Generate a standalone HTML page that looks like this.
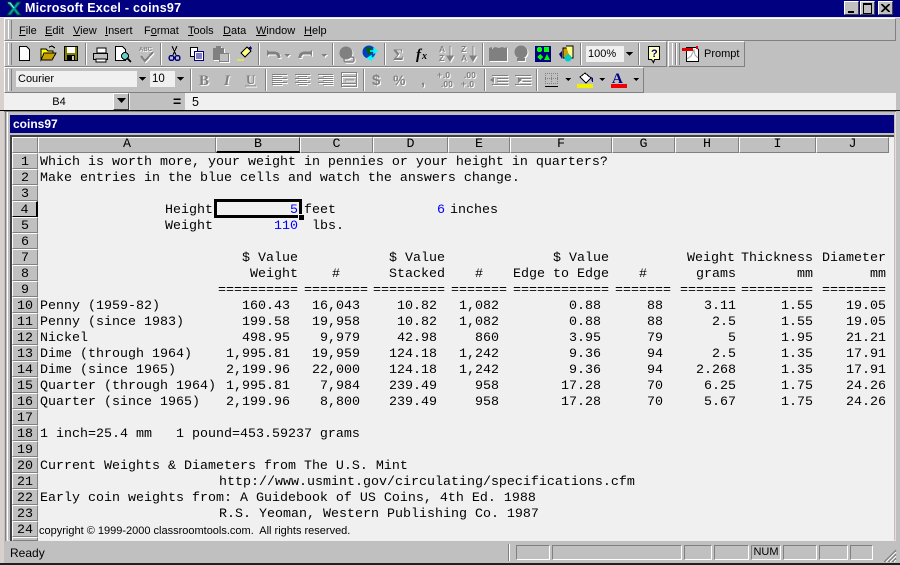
<!DOCTYPE html>
<html><head><meta charset="utf-8"><title>Microsoft Excel - coins97</title>
<style>
html,body{margin:0;padding:0;width:900px;height:565px;overflow:hidden;background:#c0c0c0}
body{position:relative;font-family:"Liberation Sans",Arial,sans-serif;font-size:12px;color:#000}
.a{position:absolute}
.r{position:absolute;left:0;width:900px;height:16px;line-height:16px;font-family:"Liberation Mono","Courier New",monospace;font-size:13.33px;white-space:pre}
.r span{position:absolute;top:2px}
.bl{color:#0000ff}
.h{position:absolute;background:#c0c0c0;border-top:1px solid #fff;border-left:1px solid #fff;border-right:1px solid #808080;border-bottom:1px solid #808080;box-sizing:border-box;text-align:center;font-family:"Liberation Mono",monospace;font-size:13.33px;line-height:14px}
.n{padding-top:2px;line-height:13px}
.p{position:absolute;top:545px;height:15px;box-sizing:border-box;border-top:1px solid #808080;border-left:1px solid #808080;border-right:1px solid #fff;border-bottom:1px solid #fff}
.e{right:602px}.c{right:532px}.d{right:455px}.g{right:291px}.l{right:14px}
.c2{right:540px}.d2{right:463px}.f2{right:401px}.g2{right:299px}.k2{right:237px}.b2{right:610px}
.sep{position:absolute;width:1px;background:#808080;border-right:1px solid #fff}
.grip{position:absolute;width:2px;border-left:1px solid #fff;border-right:1px solid #808080;background:#c0c0c0}
.tb{position:absolute;box-sizing:border-box;border-top:1px solid #fff;border-left:1px solid #fff;border-right:1px solid #808080;border-bottom:1px solid #808080}
.dis{filter:drop-shadow(1px 1px 0 #fff)}
</style></head><body>

<!-- frame -->
<div class="a" style="left:0;top:0;width:4px;height:565px;background:#d8d0cc"></div>
<div class="a" style="left:0;top:0;width:900px;height:17px;background:#000080"></div>
<div class="a" style="left:0;top:17px;width:900px;height:1px;background:#e8e4e0"></div>
<div class="a" style="left:25px;top:0;height:17px;line-height:16px;color:#fff;font-weight:bold;font-size:12.5px;letter-spacing:.25px;white-space:nowrap">Microsoft Excel - coins97</div>

<!-- app icon -->
<svg class="a" style="left:6px;top:1px" width="16" height="15" viewBox="0 0 16 15"><path d="M1 1h4l3 4 3-4h4L10 7.500 15 14h-4L8 10l-3 4H1l5-6.500z" fill="#00a0a0" stroke="#003838" stroke-width="1"/><path d="M2 2h2l4 5" stroke="#9ff" fill="none"/></svg>

<!-- window buttons -->
<div class="tb" style="left:844px;top:1px;width:15px;height:14px;background:#c0c0c0;border-color:#fff #404040 #404040 #fff"><div class="a" style="left:3px;top:9px;width:6px;height:2px;background:#000"></div></div>
<div class="tb" style="left:860px;top:1px;width:15px;height:14px;background:#c0c0c0;border-color:#fff #404040 #404040 #fff"><div class="a" style="left:2px;top:1px;width:7px;height:8px;border:1px solid #000;border-top-width:2px"></div></div>
<div class="tb" style="left:878px;top:1px;width:15px;height:14px;background:#c0c0c0;border-color:#fff #404040 #404040 #fff"><svg class="a" style="left:2px;top:2px" width="9" height="8"><path d="M0 0l8 8M1 0l8 8M8 0L0 8M9 0L1 8" stroke="#000" stroke-width="1"/></svg></div>

<!-- menu bar -->
<div class="tb" style="left:4px;top:18px;width:892px;height:23px;border-right-color:#808080"></div>
<div class="grip" style="left:8px;top:20px;height:19px"></div>
<div class="a" id="menu" style="top:22px;left:0;height:18px;line-height:18px;font-size:11px;white-space:nowrap">
<span class="a" style="left:19px"><u>F</u>ile</span><span class="a" style="left:45px"><u>E</u>dit</span><span class="a" style="left:73px"><u>V</u>iew</span><span class="a" style="left:105px"><u>I</u>nsert</span><span class="a" style="left:144px">F<u>o</u>rmat</span><span class="a" style="left:188px"><u>T</u>ools</span><span class="a" style="left:223px"><u>D</u>ata</span><span class="a" style="left:256px"><u>W</u>indow</span><span class="a" style="left:304px"><u>H</u>elp</span>
</div>

<!-- toolbars bg -->
<div class="tb" style="left:4px;top:41px;width:663px;height:26px"></div>
<div class="tb" style="left:668px;top:41px;width:77px;height:26px"></div>
<div class="tb" style="left:4px;top:67px;width:640px;height:26px"></div>
<div class="grip" style="left:8px;top:43px;height:22px"></div>
<div class="grip" style="left:8px;top:69px;height:22px"></div>
<div class="grip" style="left:672px;top:43px;height:22px"></div>
<div class="grip" style="left:676px;top:43px;height:22px"></div>
<div class="sep" style="left:85px;top:43px;height:22px"></div>
<div class="sep" style="left:160px;top:43px;height:22px"></div>
<div class="sep" style="left:258px;top:43px;height:22px"></div>
<div class="sep" style="left:332px;top:43px;height:22px"></div>
<div class="sep" style="left:384px;top:43px;height:22px"></div>
<div class="sep" style="left:482px;top:43px;height:22px"></div>
<div class="sep" style="left:580px;top:43px;height:22px"></div>
<div class="sep" style="left:638px;top:43px;height:22px"></div>
<div class="sep" style="left:190px;top:69px;height:22px"></div>
<div class="sep" style="left:265px;top:69px;height:22px"></div>
<div class="sep" style="left:363px;top:69px;height:22px"></div>
<div class="sep" style="left:484px;top:69px;height:22px"></div>
<div class="sep" style="left:536px;top:69px;height:22px"></div>

<!-- boxes -->
<div class="a" style="left:16px;top:71px;width:121px;height:16px;background:#f0f0f0;line-height:17px;font-size:11px;padding-left:2px;box-sizing:border-box">Courier</div>
<div class="a" style="left:137px;top:71px;width:9px;height:16px;background:#c0c0c0"></div>
<div class="a" style="left:150px;top:71px;width:25px;height:16px;background:#f0f0f0;line-height:17px;font-size:11.500px;padding-left:2px;box-sizing:border-box">10</div>
<div class="a" style="left:175px;top:71px;width:11px;height:16px;background:#c0c0c0"></div>
<div class="a" style="left:586px;top:46px;width:48px;height:16px;background:#f0f0f0"></div>
<div class="a" style="left:588px;top:46px;height:16px;line-height:17px;font-size:11px">100%</div>
<div class="a" style="left:624px;top:46px;width:10px;height:16px;background:#c0c0c0"></div>
<div class="a" style="left:704px;top:45px;line-height:19px;font-size:11px">Prompt</div>

<!-- toolbar icons -->
<svg class="a" style="left:0;top:40px" width="760" height="54" viewBox="0 40 760 54" font-family="Liberation Sans,sans-serif">
<g shape-rendering="crispEdges">
<!-- new -->
<path d="M19.500 46.500h7l3 3v11h-10z" fill="#fff" stroke="#000"/>
<!-- open -->
<path d="M41 60V49h5l2 2h5v2h-8l-4 7z" fill="#ff0" stroke="#000" stroke-width="1"/><path d="M41 60l3-7h12l-4 7z" fill="#c8a000" stroke="#000"/><path d="M49 47l3-1 3 2" stroke="#000" fill="none"/>
<!-- save -->
<rect x="64.500" y="46.500" width="13" height="14" fill="#808000" stroke="#000"/><rect x="67" y="47" width="8" height="6" fill="#fff"/><rect x="67" y="55" width="8" height="5" fill="#000"/><rect x="72" y="56" width="2" height="4" fill="#ccc"/>
<!-- print -->
<path d="M97 48h9v5h-9z" fill="#fff" stroke="#000"/><path d="M93.500 53.500h14v6h-14z" fill="#c0c0c0" stroke="#000"/><path d="M96 59h10v3H96z" fill="#fff" stroke="#000"/>
<!-- preview -->
<path d="M115.500 46.500h7l3 3v11h-10z" fill="#fff" stroke="#000"/><circle cx="125" cy="56" r="3.500" fill="#6cc" stroke="#000"/><path d="M127 58l4 4" stroke="#000" stroke-width="2"/>
<!-- spell -->
<g class="dis"><text x="139" y="51" font-size="6" font-weight="bold" fill="#808080">ABC</text><path d="M141 56l4 5 8-9" stroke="#808080" stroke-width="2" fill="none"/></g>
<!-- cut -->
<path d="M172 46l4 9M177 46l-4 9" stroke="#000"/><circle cx="171.500" cy="58" r="2.500" fill="none" stroke="#000080" stroke-width="1.500"/><circle cx="177.500" cy="58" r="2.500" fill="none" stroke="#000080" stroke-width="1.500"/>
<!-- copy -->
<path d="M190.500 47.500h7v9h-7z" fill="#fff" stroke="#000"/><path d="M194.500 51.500h9v9h-9z" fill="#fff" stroke="#000080"/><path d="M196 54h6M196 56h6M196 58h6" stroke="#000080"/>
<!-- paste -->
<g class="dis"><path d="M213 48h11v12h-11z" fill="#808080"/><rect x="216" y="46" width="5" height="3" fill="#808080"/><rect x="219.500" y="53.500" width="9" height="8" fill="#c0c0c0" stroke="#808080"/></g>
<!-- painter -->
<path d="M241 53l6-6 4 4-6 6z" fill="#ffff80" stroke="#000"/><path d="M248 48l3-2 1 3-2 1z" fill="#000080"/><path d="M237 60h7" stroke="#ff0" stroke-width="1"/>
<!-- undo/redo -->
<g class="dis"><path d="M267 53h7c4 0 5 2 5 5" fill="none" stroke="#808080" stroke-width="3"/><path d="M267 50v6l4-3z" fill="#808080"/>
<path d="M285 52h6l-3 3z" fill="#808080" transform="translate(-1 2)"/>
<path d="M312 53h-7c-4 0-5 2-5 5" fill="none" stroke="#808080" stroke-width="3"/><path d="M312 50v6l-4-3z" fill="#808080"/>
<path d="M321 54h6l-3 3z" fill="#808080"/></g>
</g>
<!-- hyperlink -->
<g class="dis"><circle cx="346" cy="53" r="6.500" fill="#808080"/><rect x="344" y="57" width="10" height="5" rx="2" fill="none" stroke="#808080" stroke-width="1.500"/></g>
<!-- web -->
<circle cx="369" cy="52" r="6.500" fill="#0040c0"/><path d="M366 47l5 1 1 4-3 3-2-3z" fill="#006000"/><path d="M370 51h7M377 51l-3-2v4zM368 58h7M368 58l3-2v4z" stroke="#0ff" stroke-width="1.500" fill="#0ff"/>
<!-- sum / fx -->
<text class="dis" x="393" y="60" font-size="16" font-weight="bold" fill="#808080" font-family="Liberation Serif,serif">Σ</text>
<text x="416" y="59" font-size="15" font-weight="bold" font-style="italic" font-family="Liberation Serif,serif">f</text><text x="422" y="59" font-size="10" font-weight="bold" font-style="italic" font-family="Liberation Serif,serif">x</text>
<!-- sort -->
<g class="dis"><text x="439" y="52" font-size="8.500" font-weight="bold" fill="#808080">A</text><text x="439" y="61" font-size="8.500" font-weight="bold" fill="#808080">Z</text><path d="M450 46v12M447 56h6l-3 5z" stroke="#808080" fill="#808080"/>
<text x="461" y="52" font-size="8.500" font-weight="bold" fill="#808080">Z</text><text x="461" y="61" font-size="8.500" font-weight="bold" fill="#808080">A</text><path d="M473 46v12M470 56h6l-3 5z" stroke="#808080" fill="#808080"/>
<!-- map -->
<path d="M489 48l3-1v2l3-2 4 1 3-1 3 1 2-1v14h-18z" fill="#808080"/>
<!-- drawing -->
<circle cx="521" cy="52" r="6.500" fill="#808080"/><rect x="517" y="58" width="8" height="3" fill="#808080"/></g>
<!-- shapes -->
<g shape-rendering="crispEdges"><rect x="535" y="46" width="16" height="16" fill="#000080"/><rect x="537" y="47" width="5" height="5" fill="#0f0" rx="2"/><rect x="544" y="47" width="5" height="5" fill="#0f0"/><path d="M540 54l3 3-3 3-3-3zM547 54l3 6h-6z" fill="#0f0"/></g>
<!-- 3d -->
<path d="M563 48h6v10h-6z" fill="#c8a000" stroke="#000"/><path d="M566 46h7v12h-3" fill="#ffff80" stroke="#000"/><path d="M559 54l3-3v8z" fill="#000080"/><circle cx="568" cy="58" r="3.500" fill="#0cc"/>
<!-- help -->
<path d="M648.500 46.500h11v13h-5l-1 3-2-3h-3z" fill="#ffffc0" stroke="#000" shape-rendering="crispEdges"/><text x="651" y="57" font-size="11" font-weight="bold" fill="#000080">?</text>
<!-- pdf -->
<g shape-rendering="crispEdges"><path d="M686.500 47.500h10l2 2v12h-12z" fill="#fff" stroke="#000"/><rect x="682" y="48" width="11" height="3" fill="#e00000"/><rect x="696" y="46" width="2" height="3" fill="#e00000"/></g><path d="M687 59l4-3 3-6 1 5 3 3" fill="none" stroke="#a0a0a0"/>
<!-- combo arrows -->
<g shape-rendering="crispEdges" fill="#000"><path d="M139 77h7l-3.500 4z"/><path d="M177 77h7l-3.500 4z"/><path d="M626 52h7l-3.500 4z"/><path d="M565 78h6l-3 3z"/><path d="M599 78h6l-3 3z"/><path d="M633 78h6l-3 3z"/></g>
<!-- B I U -->
<g class="dis">
<text x="199" y="85" font-size="15" font-weight="bold" fill="#808080" font-family="Liberation Serif,serif">B</text>
<text x="224" y="85" font-size="15" font-weight="bold" font-style="italic" fill="#808080" font-family="Liberation Serif,serif">I</text>
<text x="246" y="84" font-size="13" font-weight="bold" fill="#808080" font-family="Liberation Serif,serif">U</text><path d="M245 86h11" stroke="#808080"/>
</g>
<g shape-rendering="crispEdges" stroke="#808080" stroke-width="1" fill="none" class="dis">
<path d="M272 74.500h15M272 76.500h10M272 78.500h15M272 80.500h10M272 82.500h15M272 84.500h10"/>
<path d="M295 74.500h15M298 76.500h9M295 78.500h15M298 80.500h9M295 82.500h15M298 84.500h9"/>
<path d="M318 74.500h15M323 76.500h10M318 78.500h15M323 80.500h10M318 82.500h15M323 84.500h10"/>
<rect x="341.500" y="72.500" width="15" height="14"/><path d="M342 76.500h14M342 83.500h14M345 80h9"/>
<path d="M492 75.500h16M497 78.500h11M497 81.500h11M492 84.500h16"/>
<path d="M515 75.500h16M520 78.500h11M520 81.500h11M515 84.500h16"/>
</g>
<g class="dis">
<path d="M490 80l4-3v6zM522 80l-4-3v6z" fill="#808080"/>
<text x="372" y="85" font-size="15" font-weight="bold" fill="#808080">$</text>
<text x="393" y="85" font-size="14" font-weight="bold" fill="#808080">%</text>
<text x="421" y="85" font-size="15" font-weight="bold" fill="#808080">,</text>
<text x="443" y="78" font-size="8.500" font-weight="bold" fill="#808080">.0</text><text x="441" y="87" font-size="8.500" font-weight="bold" fill="#808080">.00</text><text x="437" y="78" font-size="9" font-weight="bold" fill="#808080">+</text>
<text x="464" y="78" font-size="8.500" font-weight="bold" fill="#808080">.00</text><text x="467" y="87" font-size="8.500" font-weight="bold" fill="#808080">.0</text><text x="461" y="87" font-size="9" font-weight="bold" fill="#808080">+</text>
</g>
<!-- borders -->
<g shape-rendering="crispEdges"><path d="M545 73.500h13M545 78.500h13M545 83.500h13M545.500 73v11M551.500 73v11M557.500 73v11" stroke="#808080" stroke-dasharray="1 1" fill="none"/><rect x="545" y="86" width="13" height="1" fill="#000"/>
<!-- fill -->
<path d="M580 77l5-4 6 5-5 5z" fill="#fff" stroke="#000"/><path d="M591 77l2 1v4h-1z" fill="#000080"/><rect x="577" y="84" width="16" height="4" fill="#f0f000"/>
<!-- font color --><rect x="611" y="84" width="16" height="4" fill="#f00000"/></g>
<text x="612" y="83" font-size="15" font-weight="bold" fill="#000080" font-family="Liberation Serif,serif">A</text>
</svg>

<!-- formula bar -->
<div class="a" style="left:4px;top:93px;width:892px;height:17px;background:#f0f0f0"></div>
<div class="a" style="left:130px;top:93px;width:55px;height:17px;background:#c0c0c0"></div>
<div class="a" style="left:5px;top:94px;width:108px;height:17px;line-height:17px;text-align:center;font-size:11px;padding-left:0;box-sizing:border-box">B4</div>
<div class="tb" style="left:113px;top:93px;width:16px;height:17px;background:#c0c0c0;border-color:#fff #404040 #404040 #fff"><svg class="a" style="left:2px;top:4px" width="10" height="6"><path d="M1 0h9l-4.500 5z" fill="#000"/></svg></div>
<div class="a" style="left:173px;top:93px;height:17px;line-height:17px;font-weight:bold;font-size:14px">=</div>
<div class="a" style="left:192px;top:94px;height:17px;line-height:17px;font-size:12.500px">5</div>
<div class="a" style="left:0;top:110px;width:900px;height:1px;background:#000"></div>
<div class="a" style="left:4px;top:111px;width:892px;height:1px;background:#808080"></div>

<!-- workbook window -->
<div class="a" style="left:7px;top:112px;width:889px;height:429px;background:#c0c0c0;border-left:1px solid #fff;border-right:1px solid #e8dcdc;border-bottom:1px solid #f0d8d8;box-sizing:border-box"></div>
<div class="a" style="left:5px;top:112px;width:1px;height:429px;background:#808080"></div>
<div class="a" style="left:10px;top:115px;width:884px;height:18px;background:#000080;color:#fff;font-weight:bold;font-size:12px;line-height:18px;padding-left:3px;box-sizing:border-box">coins97</div>
<div class="a" style="left:10px;top:135px;width:884px;height:406px;background:#f0f0f0"></div>
<div class="a" style="left:10px;top:135px;width:884px;height:2px;background:#404040"></div>
<div class="a" style="left:10px;top:135px;width:2px;height:406px;background:#404040"></div>

<!-- column headers -->
<div class="h" style="left:12px;top:137px;width:26px;height:16px"></div>
<div class="h" style="left:38px;top:137px;width:178px;height:16px">A</div>
<div class="h" style="left:216px;top:137px;width:84px;height:16px;border-color:#fff #404040 #000 #fff;border-bottom-width:2px;line-height:13px">B</div>
<div class="h" style="left:300px;top:137px;width:73px;height:16px">C</div>
<div class="h" style="left:373px;top:137px;width:75px;height:16px">D</div>
<div class="h" style="left:448px;top:137px;width:62px;height:16px">E</div>
<div class="h" style="left:510px;top:137px;width:102px;height:16px">F</div>
<div class="h" style="left:612px;top:137px;width:63px;height:16px">G</div>
<div class="h" style="left:675px;top:137px;width:64px;height:16px">H</div>
<div class="h" style="left:739px;top:137px;width:77px;height:16px">I</div>
<div class="h" style="left:816px;top:137px;width:73px;height:16px">J</div>

<!-- row headers -->
<div class="h n" style="left:12px;top:153px;width:26px;height:16px">1</div>
<div class="h n" style="left:12px;top:169px;width:26px;height:16px">2</div>
<div class="h n" style="left:12px;top:185px;width:26px;height:16px">3</div>
<div class="h n" style="left:12px;top:201px;width:26px;height:16px;border-color:#fff #000 #000 #fff;border-right-width:2px">4</div>
<div class="h n" style="left:12px;top:217px;width:26px;height:16px">5</div>
<div class="h n" style="left:12px;top:233px;width:26px;height:16px">6</div>
<div class="h n" style="left:12px;top:249px;width:26px;height:16px">7</div>
<div class="h n" style="left:12px;top:265px;width:26px;height:16px">8</div>
<div class="h n" style="left:12px;top:281px;width:26px;height:16px">9</div>
<div class="h n" style="left:12px;top:297px;width:26px;height:16px">10</div>
<div class="h n" style="left:12px;top:313px;width:26px;height:16px">11</div>
<div class="h n" style="left:12px;top:329px;width:26px;height:16px">12</div>
<div class="h n" style="left:12px;top:345px;width:26px;height:16px">13</div>
<div class="h n" style="left:12px;top:361px;width:26px;height:16px">14</div>
<div class="h n" style="left:12px;top:377px;width:26px;height:16px">15</div>
<div class="h n" style="left:12px;top:393px;width:26px;height:16px">16</div>
<div class="h n" style="left:12px;top:409px;width:26px;height:16px">17</div>
<div class="h n" style="left:12px;top:425px;width:26px;height:16px">18</div>
<div class="h n" style="left:12px;top:441px;width:26px;height:16px">19</div>
<div class="h n" style="left:12px;top:457px;width:26px;height:16px">20</div>
<div class="h n" style="left:12px;top:473px;width:26px;height:16px">21</div>
<div class="h n" style="left:12px;top:489px;width:26px;height:16px">22</div>
<div class="h n" style="left:12px;top:505px;width:26px;height:16px">23</div>
<div class="h n" style="left:12px;top:521px;width:26px;height:16px">24</div>
<div class="h" style="left:12px;top:537px;width:26px;height:4px"></div>

<!-- cells -->
<div class="r" style="top:153px"><span style="left:40px">Which is worth more, your weight in pennies or your height in quarters?</span></div>
<div class="r" style="top:169px"><span style="left:40px">Make entries in the blue cells and watch the answers change.</span></div>
<div class="r" style="top:201px"><span style="right:687px">Height</span><span class="bl" style="right:602px">5</span><span style="left:304px">feet</span><span class="bl" style="right:455px">6</span><span style="left:450px">inches</span></div>
<div class="r" style="top:217px"><span style="right:687px">Weight</span><span class="bl" style="right:602px">110</span><span style="left:312px">lbs.</span></div>
<div class="r" style="top:249px"><span class="e">$ Value</span><span class="d">$ Value</span><span class="g">$ Value</span><span style="right:165px">Weight</span><span style="right:87px">Thickness</span><span class="l">Diameter</span></div>
<div class="r" style="top:265px"><span class="e">Weight</span><span style="right:560px">#</span><span class="d">Stacked</span><span style="right:417px">#</span><span class="g">Edge to Edge</span><span style="right:253px">#</span><span style="right:164px">grams</span><span style="right:87px">mm</span><span class="l">mm</span></div>
<div class="r" style="top:281px"><span class="e">==========</span><span class="c">========</span><span class="d">=========</span><span style="right:393px">=======</span><span class="g">============</span><span style="right:229px">=======</span><span style="right:164px">=======</span><span style="right:87px">=========</span><span class="l">========</span></div>

<div class="r" style="top:297px"><span style="left:40px">Penny (1959-82)</span><span class="b2">160.43</span><span class="c2">16,043</span><span class="d2">10.82</span><span class="f2">1,082</span><span class="g2">0.88</span><span class="k2">88</span><span style="right:164px">3.11</span><span style="right:87px">1.55</span><span class="l">19.05</span></div>
<div class="r" style="top:313px"><span style="left:40px">Penny (since 1983)</span><span class="b2">199.58</span><span class="c2">19,958</span><span class="d2">10.82</span><span class="f2">1,082</span><span class="g2">0.88</span><span class="k2">88</span><span style="right:164px">2.5</span><span style="right:87px">1.55</span><span class="l">19.05</span></div>
<div class="r" style="top:329px"><span style="left:40px">Nickel</span><span class="b2">498.95</span><span class="c2">9,979</span><span class="d2">42.98</span><span class="f2">860</span><span class="g2">3.95</span><span class="k2">79</span><span style="right:164px">5</span><span style="right:87px">1.95</span><span class="l">21.21</span></div>
<div class="r" style="top:345px"><span style="left:40px">Dime (through 1964)</span><span class="b2">1,995.81</span><span class="c2">19,959</span><span class="d2">124.18</span><span class="f2">1,242</span><span class="g2">9.36</span><span class="k2">94</span><span style="right:164px">2.5</span><span style="right:87px">1.35</span><span class="l">17.91</span></div>
<div class="r" style="top:361px"><span style="left:40px">Dime (since 1965)</span><span class="b2">2,199.96</span><span class="c2">22,000</span><span class="d2">124.18</span><span class="f2">1,242</span><span class="g2">9.36</span><span class="k2">94</span><span style="right:164px">2.268</span><span style="right:87px">1.35</span><span class="l">17.91</span></div>
<div class="r" style="top:377px"><span style="left:40px">Quarter (through 1964)</span><span class="b2">1,995.81</span><span class="c2">7,984</span><span class="d2">239.49</span><span class="f2">958</span><span class="g2">17.28</span><span class="k2">70</span><span style="right:164px">6.25</span><span style="right:87px">1.75</span><span class="l">24.26</span></div>
<div class="r" style="top:393px"><span style="left:40px">Quarter (since 1965)</span><span class="b2">2,199.96</span><span class="c2">8,800</span><span class="d2">239.49</span><span class="f2">958</span><span class="g2">17.28</span><span class="k2">70</span><span style="right:164px">5.67</span><span style="right:87px">1.75</span><span class="l">24.26</span></div>

<div class="r" style="top:425px"><span style="left:40px">1 inch=25.4 mm   1 pound=453.59237 grams</span></div>
<div class="r" style="top:457px"><span style="left:40px">Current Weights &amp; Diameters from The U.S. Mint</span></div>
<div class="r" style="top:473px"><span style="left:219px">http://www.usmint.gov/circulating/specifications.cfm</span></div>
<div class="r" style="top:489px"><span style="left:40px">Early coin weights from: A Guidebook of US Coins, 4th Ed. 1988</span></div>
<div class="r" style="top:505px"><span style="left:219px">R.S. Yeoman, Western Publishing Co. 1987</span></div>
<div class="a" style="left:39px;top:523px;height:16px;line-height:16px;font-size:11px;white-space:pre">copyright © 1999-2000 classroomtools.com.  All rights reserved.</div>

<!-- active cell -->
<div class="a" style="left:214px;top:199px;width:88px;height:19px;border:3px solid #000;box-sizing:border-box"></div>
<div class="a" style="left:298px;top:214px;width:5px;height:5px;background:#000;border:1px solid #f0f0f0;box-sizing:content-box"></div>

<!-- status bar -->
<div class="a" style="left:4px;top:541px;width:896px;height:22px;background:#c0c0c0"></div>
<div class="a" style="left:0;top:563px;width:900px;height:2px;background:#202020"></div>
<div class="a" style="left:10px;top:544px;line-height:18px;font-size:12px">Ready</div>
<div class="sep" style="left:508px;top:544px;height:17px"></div>
<div class="p" style="left:516px;width:34px"></div>
<div class="p" style="left:552px;width:130px"></div>
<div class="p" style="left:684px;width:28px"></div>
<div class="p" style="left:714px;width:35px"></div>
<div class="p" style="left:751px;width:30px;line-height:13px;font-size:11px;text-align:center">NUM</div>
<div class="p" style="left:783px;width:34px"></div>
<div class="p" style="left:819px;width:29px"></div>
<div class="p" style="left:850px;width:23px"></div>
<svg class="a" style="left:883px;top:549px" width="14" height="14"><path d="M1 13L13 1M2 13L13 2M5 13L13 5M6 13L13 6M9 13L13 9M10 13L13 10" stroke="#808080"/><path d="M3 13L13 3M7 13L13 7M11 13L13 11" stroke="#fff"/></svg>

</body></html>
